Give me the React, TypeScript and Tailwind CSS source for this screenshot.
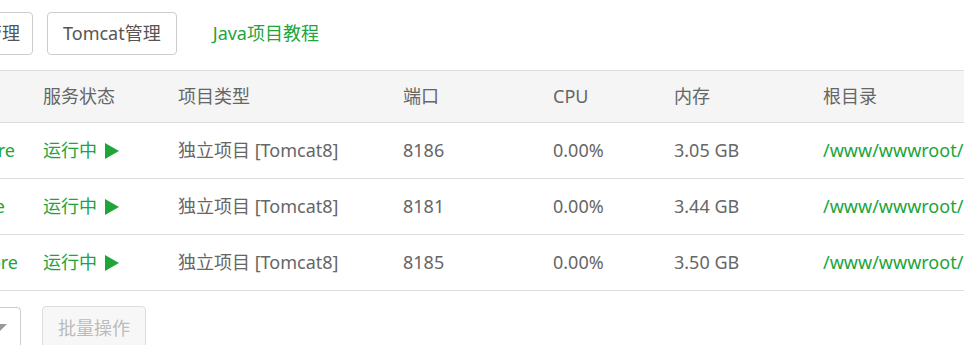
import React from 'react';

const rows = [
  { name: 'mall-store', cut: 'pr-[28px]', port: '8186', cpu: '0.00%', mem: '3.05 GB' },
  { name: 'mall-service', cut: 'pr-[38px]', port: '8181', cpu: '0.00%', mem: '3.44 GB' },
  { name: 'shop-core', cut: 'pr-[25px]', port: '8185', cpu: '0.00%', mem: '3.50 GB' },
];

const cols = 'grid grid-cols-[43px_135px_225px_150px_121px_149px_1fr] items-center';

function Play() {
  return (
    <svg width="14" height="16" viewBox="0 0 14 16" className="ml-[8px] mt-[1px]">
      <polygon points="0,0 14,8 0,16" fill="#20a53a" />
    </svg>
  );
}

export default function App() {
  return (
    <div
      className="w-[964px] h-[345px] overflow-hidden bg-white text-[18px] text-[#666]"
      style={{ fontFamily: '"Noto Sans", "Noto Sans CJK SC", sans-serif' }}
    >
      {/* toolbar */}
      <div className="flex items-center h-[70px] pb-[4px]">
        <button className="h-[43px] w-[80px] ml-[-47px] rounded-[4px] border border-[#ccc] bg-white text-[#555] text-right pr-[12px]">
          管理
        </button>
        <button className="h-[43px] ml-[14px] px-[15px] rounded-[4px] border border-[#ccc] bg-white text-[#555]">
          Tomcat管理
        </button>
        <a className="ml-[36px] text-[#20a53a]">Java项目教程</a>
      </div>

      {/* table */}
      <div className="border-t border-[#ddd]">
        <div className={`${cols} h-[52px] bg-[#f5f5f5] border-b border-[#ddd]`}>
          <div />
          <div>服务状态</div>
          <div>项目类型</div>
          <div>端口</div>
          <div>CPU</div>
          <div>内存</div>
          <div>根目录</div>
        </div>
        {rows.map((r) => (
          <div key={r.port} className={`${cols} h-[56px] border-b border-[#ddd]`}>
            <div className={`flex justify-end whitespace-nowrap text-[#20a53a] ${r.cut}`}>
              <span>{r.name}</span>
            </div>
            <div className="flex items-center text-[#20a53a]">
              运行中
              <Play />
            </div>
            <div className="whitespace-nowrap">独立项目 [Tomcat8]</div>
            <div>{r.port}</div>
            <div>{r.cpu}</div>
            <div>{r.mem}</div>
            <div className="whitespace-nowrap text-[#20a53a]">/www/wwwroot/{r.name}</div>
          </div>
        ))}
      </div>

      {/* footer */}
      <div className="flex items-start mt-[15px]">
        <div className="relative h-[44px] w-[80px] ml-[-59px] mt-[1px] rounded-[4px] border border-[#ccc] bg-white">
          <span className="absolute right-[13px] top-[16px] w-0 h-0 border-l-[8px] border-r-[8px] border-t-[8px] border-l-transparent border-r-transparent border-t-[#999]" />
        </div>
        <button className="h-[44px] ml-[21px] px-[15px] rounded-[4px] border border-[#ddd] bg-[#f7f7f7] text-[#bbb]">
          批量操作
        </button>
      </div>
    </div>
  );
}
